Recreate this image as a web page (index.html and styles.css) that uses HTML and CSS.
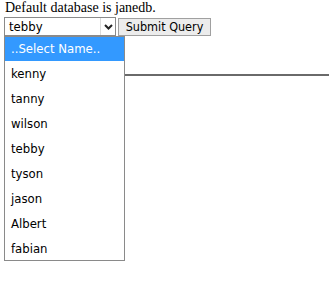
FILE: index.html
```html
<!DOCTYPE html>
<html>
<head>
<meta charset="utf-8">
<link rel="stylesheet" href="styles.css">
</head>
<body>
<p class="info">Default database is janedb.</p>
<form class="row">
  <div class="select">
    <span class="value">tebby</span>
    <span class="arrow"><svg width="9" height="6" viewBox="0 0 9 6"><path d="M1 1 L4.5 4.5 L8 1" fill="none" stroke="#222" stroke-width="2"/></svg></span>
    <div class="popup">
      <div class="opt sel">..Select Name..</div>
      <div class="opt">kenny</div>
      <div class="opt">tanny</div>
      <div class="opt">wilson</div>
      <div class="opt">tebby</div>
      <div class="opt">tyson</div>
      <div class="opt">jason</div>
      <div class="opt">Albert</div>
      <div class="opt">fabian</div>
    </div>
  </div>
  <button type="button" class="btn">Submit Query</button>
</form>
<hr class="rule">
</body>
</html>
```
FILE: styles.css
```css
html, body { margin: 0; padding: 0; background: #fff; }
html { height: 294px; }
body { min-height: 294px; box-sizing: border-box; padding: 1px 0 0 4px; font-family: "Liberation Serif", serif; }
.info { margin: 0; font-size: 14px; line-height: 13px; padding-left: 1px; color: #000; }
.row { display: flex; align-items: flex-start; gap: 2px; margin-top: 3px; }
.select {
  position: relative;
  width: 112px; height: 19px; box-sizing: border-box;
  border: 1px solid #8a8a8a; background: #fff;
  display: flex; align-items: center;
  font-family: "DejaVu Sans Condensed", "Liberation Sans", sans-serif; font-size: 13px; color: #000;
}
.value { flex: 1; padding-left: 4px; }
.arrow {
  width: 14px; height: 17px; border-left: 1px solid #dcdcdc;
  display: flex; align-items: center; justify-content: center;
}
.popup {
  position: absolute; left: -1px; top: 18px;
  width: 121px; height: 225px; box-sizing: border-box;
  border: 1px solid #8a8a8a; background: #fff;
  display: flex; flex-direction: column; z-index: 2;
}
.opt { flex: none; height: 25px; line-height: 25px; padding-left: 6px; font-size: 13px; color: #000; }
.opt.sel { background: #3399ff; color: #fff; height: 24px; line-height: 24px; }
.btn {
  margin: 1px 0 0; padding: 0; width: 93px; height: 18px; box-sizing: border-box;
  border: 1px solid #a0a0a0; background: #ececec; border-radius: 0;
  font-family: "DejaVu Sans Condensed", "Liberation Sans", sans-serif; font-size: 12.5px; color: #000; line-height: 14px;
}
.rule { margin: 38px 0 0; border: 0; height: 2px; background: #6a6a6a; }
```
